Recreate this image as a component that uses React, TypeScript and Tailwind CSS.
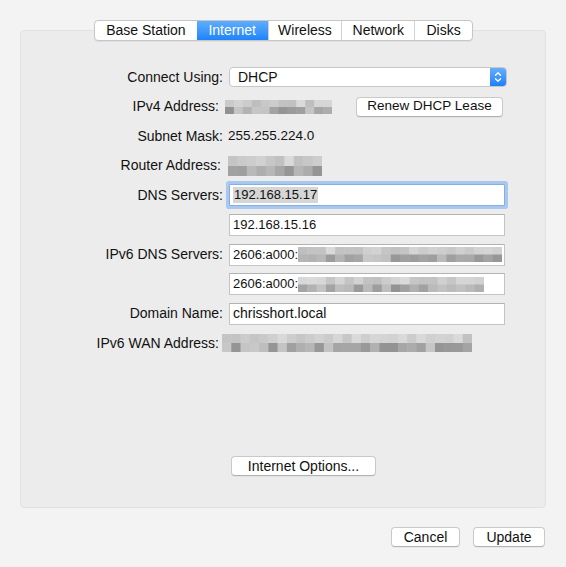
import type { ReactNode } from 'react';

const font = { fontFamily: '"Liberation Sans", Arial, sans-serif' };

function rng(seed: number) {
  let s = seed;
  return () => {
    s = (s * 1103515245 + 12345) % 2147483648;
    return s / 2147483648;
  };
}

// pixelated "redacted" block
function Mosaic({ width, height, cols, rows, seed, className = '' }: { width: number; height: number; cols: number; rows: number; seed: number; className?: string }) {
  const r = rng(seed);
  const cw = width / cols;
  const rh = height / rows;
  const cells: ReactNode[] = [];
  for (let y = 0; y < rows; y++) {
    for (let x = 0; x < cols; x++) {
      const base = y === 0 ? 220 : 200;
      const v = Math.round(base - r() * (y === 0 ? 30 : 55));
      cells.push(<rect key={`${x}-${y}`} x={x * cw} y={y * rh} width={cw + 0.5} height={rh + 0.5} fill={`rgb(${v},${v},${v})`} />);
    }
  }
  return (
    <svg width={width} height={height} className={className}>
      {cells}
    </svg>
  );
}

function Row({ label, labelClass = '', children }: { label?: string; labelClass?: string; children: ReactNode }) {
  return (
    <div className="flex h-[22px] items-center">
      <div className={`w-[202px] text-right ${labelClass}`}>{label}</div>
      <div className="ml-[6px] flex w-[278px] items-center">{children}</div>
    </div>
  );
}

function Field({ children, focused = false }: { children: ReactNode; focused?: boolean }) {
  return (
    <div
      className={`flex h-[22px] w-[276px] items-center overflow-hidden border bg-white pl-[3px] ${
        focused ? 'border-[#86aee4] shadow-[0_0_0_3px_#a9c8f0] rounded-[1px]' : 'border-[#c4c4c4] border-t-[#b3b3b3]'
      }`}
    >
      {children}
    </div>
  );
}

function MacButton({ children, className = '' }: { children: ReactNode; className?: string }) {
  return (
    <button className={`flex h-[20px] items-center justify-center rounded-[4px] border border-[#c9c9c9] border-b-[#b2b2b2] bg-white text-[#111] shadow-[0_1px_0_rgba(0,0,0,0.04)] ${className}`}>
      {children}
    </button>
  );
}

const tabs = ['Base Station', 'Internet', 'Wireless', 'Network', 'Disks'];
const tabWidths = ['w-[102px]', 'w-[71px]', 'w-[74px]', 'w-[73px]', 'w-[58px]'];

export default function App() {
  return (
    <div className="h-[567px] w-[566px] bg-[#f3f3f3] pt-[30px] text-[14px] text-[#111]" style={font}>
      <div className="mx-[20px] flex h-[478px] w-[526px] flex-col rounded-[4px] border border-[#e1e1e1] bg-[#ececec]">
        {/* segmented tabs */}
        <div className="-mt-[11px] ml-[73px] flex h-[21px] w-[379px] overflow-hidden rounded-[4px] border border-[#c6c6c6] bg-white shadow-[0_1px_0_rgba(0,0,0,0.05)]">
          {tabs.map((t, i) => (
            <div
              key={t}
              className={`flex h-full items-center justify-center ${tabWidths[i]} ${i > 0 ? 'border-l border-[#d2d2d2]' : ''} ${
                t === 'Internet' ? 'bg-linear-to-b from-[#5eadfc] to-[#1a84fb] text-white border-l-0' : ''
              }`}
            >
              {t}
            </div>
          ))}
        </div>

        <div className="mt-[25px] flex flex-col gap-[7.6px]">
          <Row label="Connect Using:">
            <div className="flex h-[20px] w-[278px] items-stretch overflow-hidden rounded-[4px] border border-[#c6c6c6] bg-white">
              <span className="flex flex-1 items-center pl-[8px]">DHCP</span>
              <span className="flex w-[16px] items-center justify-center bg-linear-to-b from-[#64aefc] to-[#1b7ff9]">
                <svg width="8" height="12" viewBox="0 0 8 12" fill="none" stroke="white" strokeWidth="1.4" strokeLinecap="round" strokeLinejoin="round">
                  <path d="M1.5 4.2 L4 1.7 L6.5 4.2" />
                  <path d="M1.5 7.8 L4 10.3 L6.5 7.8" />
                </svg>
              </span>
            </div>
          </Row>
          <Row label="IPv4 Address:" labelClass="pr-[4px]">
            <Mosaic width={107} height={14} cols={12} rows={2} seed={7} className="-ml-[4px]" />
            <MacButton className="ml-auto mr-[4px] w-[147px] text-[13.5px]">Renew DHCP Lease</MacButton>
          </Row>
          <Row label="Subnet Mask:">
            <span className="-ml-[1px] text-[13.5px]">255.255.224.0</span>
          </Row>
          <Row label="Router Address:" labelClass="pr-[2px]">
            <Mosaic width={94} height={20} cols={10} rows={2} seed={21} className="-ml-[1px]" />
          </Row>
          <Row label="DNS Servers:">
            <Field focused>
              <span className="bg-[#d6d6d6] px-[1px] text-[13px] leading-[16px]">192.168.15.17</span>
            </Field>
          </Row>
          <Row>
            <Field>
              <span className="text-[13px]">192.168.15.16</span>
            </Field>
          </Row>
          <Row label="IPv6 DNS Servers:">
            <Field>
              <span className="text-[13px]">2606:a000:</span>
              <Mosaic width={204} height={15} cols={22} rows={2} seed={33} />
            </Field>
          </Row>
          <Row>
            <Field>
              <span className="text-[13px]">2606:a000:</span>
              <Mosaic width={186} height={15} cols={20} rows={2} seed={45} />
            </Field>
          </Row>
          <Row label="Domain Name:">
            <Field>chrisshort.local</Field>
          </Row>
          <Row label="IPv6 WAN Address:" labelClass="pr-[4px]">
            <Mosaic width={250} height={18} cols={27} rows={2} seed={58} className="-ml-[7px]" />
          </Row>
        </div>

        <div className="mt-[102px] pl-[210px]">
          <MacButton className="w-[145px]">Internet Options...</MacButton>
        </div>
      </div>

      <div className="mt-[19px] flex justify-end gap-[13px] pr-[21px]">
        <MacButton className="w-[69px]">Cancel</MacButton>
        <MacButton className="w-[72px]">Update</MacButton>
      </div>
    </div>
  );
}
